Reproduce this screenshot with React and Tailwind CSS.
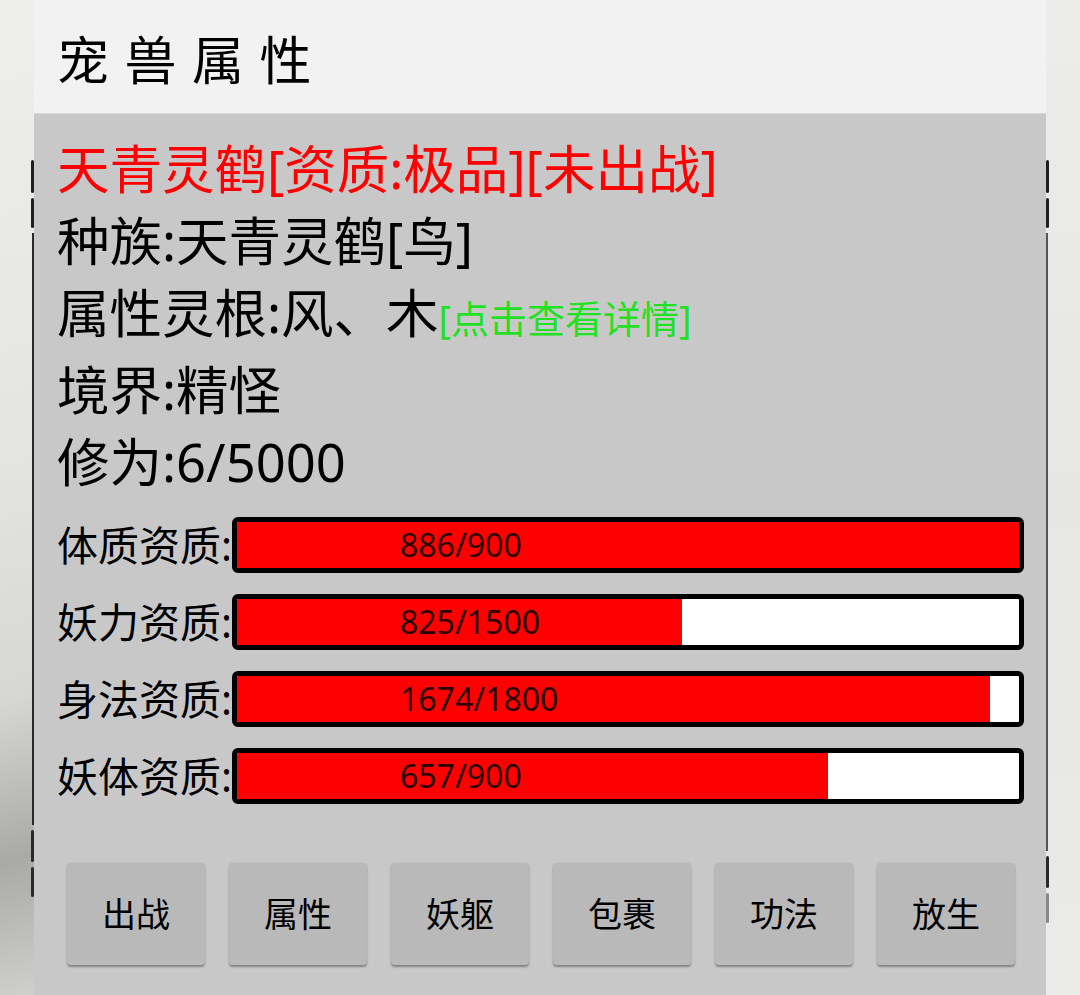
import React from 'react';

const FONT = "font-['Noto_Sans','Noto_Sans_CJK_SC',sans-serif]";

const APTITUDES = [
    { label: '体质资质:', value: '886/900',   pct: 100 },
    { label: '妖力资质:', value: '825/1500',  pct: 56.9 },
    { label: '身法资质:', value: '1674/1800', pct: 96.3 },
    { label: '妖体资质:', value: '657/900',   pct: 75.6 },
];

const ACTIONS = ['出战', '属性', '妖躯', '包裹', '功法', '放生'];

function AptitudeBar({ label, value, pct }) {
    return (
        <div className="flex items-center h-[56px]">
            <span className="w-[175px] shrink-0 text-[41px] leading-none text-black">{label}</span>
            <div className="relative flex-1 h-[56px] border-[5px] border-black rounded-[6px] bg-white overflow-hidden">
                <div className="h-full bg-[#ff0000]" style={{ width: `${pct}%` }} />
                <span className="absolute left-[163px] top-0 h-full flex items-center text-[32px] leading-none text-[#2a0000]">
                    {value}
                </span>
            </div>
        </div>
    );
}

// the dark pen marks just outside the panel edges
function EdgeMarks({ side }) {
    const left = side === 'left';
    return (
        <div className={`flex flex-col pt-[160px] gap-[5px] ${left ? 'items-end' : 'items-start'}`}>
            <div className="w-[3px] h-[33px] bg-[#1e1e1e] rounded-full" />
            <div className="w-[3px] h-[30px] bg-[#1e1e1e] rounded-full" />
            <div className={`w-[2px] ${left ? 'h-[592px] bg-[#2a2a2a]' : 'h-[618px] bg-[#555]'}`} />
            <div className="w-[3px] h-[32px] bg-[#2a2a2a] rounded-full" />
            <div className={`w-[3px] h-[30px] rounded-full ${left ? 'bg-[#2a2a2a]' : 'bg-[#888]'}`} />
        </div>
    );
}

export default function App() {
    return (
        <div className={`w-[1080px] h-[995px] overflow-hidden flex ${FONT}`}>
            {/* left stone margin */}
            <div className="w-[34px] shrink-0 bg-[linear-gradient(165deg,#eeeeec_0%,#e4e4e2_45%,#d6d6d4_70%,#a9a9a7_86%,#cfcfcd_100%)]">
                <EdgeMarks side="left" />
            </div>

            {/* panel */}
            <div className="flex-1 flex flex-col bg-[#c8c8c8]">
                <div className="h-[114px] shrink-0 bg-[#f2f2f2] border-b border-[#d8d8d8] flex items-center pl-[23px] pt-[6px]">
                    <h1 className="text-[52px] leading-none text-black tracking-[1px]">宠 兽 属 性</h1>
                </div>

                <div className="pl-[23px] pr-[22px] pt-[19px]">
                    <div className="text-[52.5px] leading-[72px] text-black">
                        <p className="text-[#ff0000]">天青灵鹤[资质:极品][未出战]</p>
                        <p>种族:天青灵鹤[鸟]</p>
                        <p>
                            属性灵根:风、木
                            <span className="text-[38px] text-[#22e022]">[点击查看详情]</span>
                        </p>
                        <p>境界:精怪</p>
                        <p>修为:6/5000</p>
                    </div>

                    <div className="mt-[19px] flex flex-col gap-[21px]">
                        {APTITUDES.map(a => <AptitudeBar key={a.label} {...a} />)}
                    </div>
                </div>

                <div className="mt-[58px] pl-[33px] flex gap-[24px]">
                    {ACTIONS.map(t => (
                        <button key={t}
                            className="w-[138px] h-[103px] rounded-[4px] bg-[#b9b9b9] shadow-[0_2px_2px_rgba(0,0,0,0.35)]
                                       border-t border-[#c4c4c4] flex items-center justify-center text-[34px] text-black"
                        >
                            {t}
                        </button>
                    ))}
                </div>
            </div>

            {/* right stone margin */}
            <div className="w-[34px] shrink-0 bg-[linear-gradient(180deg,#ececea_0%,#e6e6e4_50%,#eaeae8_100%)]">
                <EdgeMarks side="right" />
            </div>
        </div>
    );
}
